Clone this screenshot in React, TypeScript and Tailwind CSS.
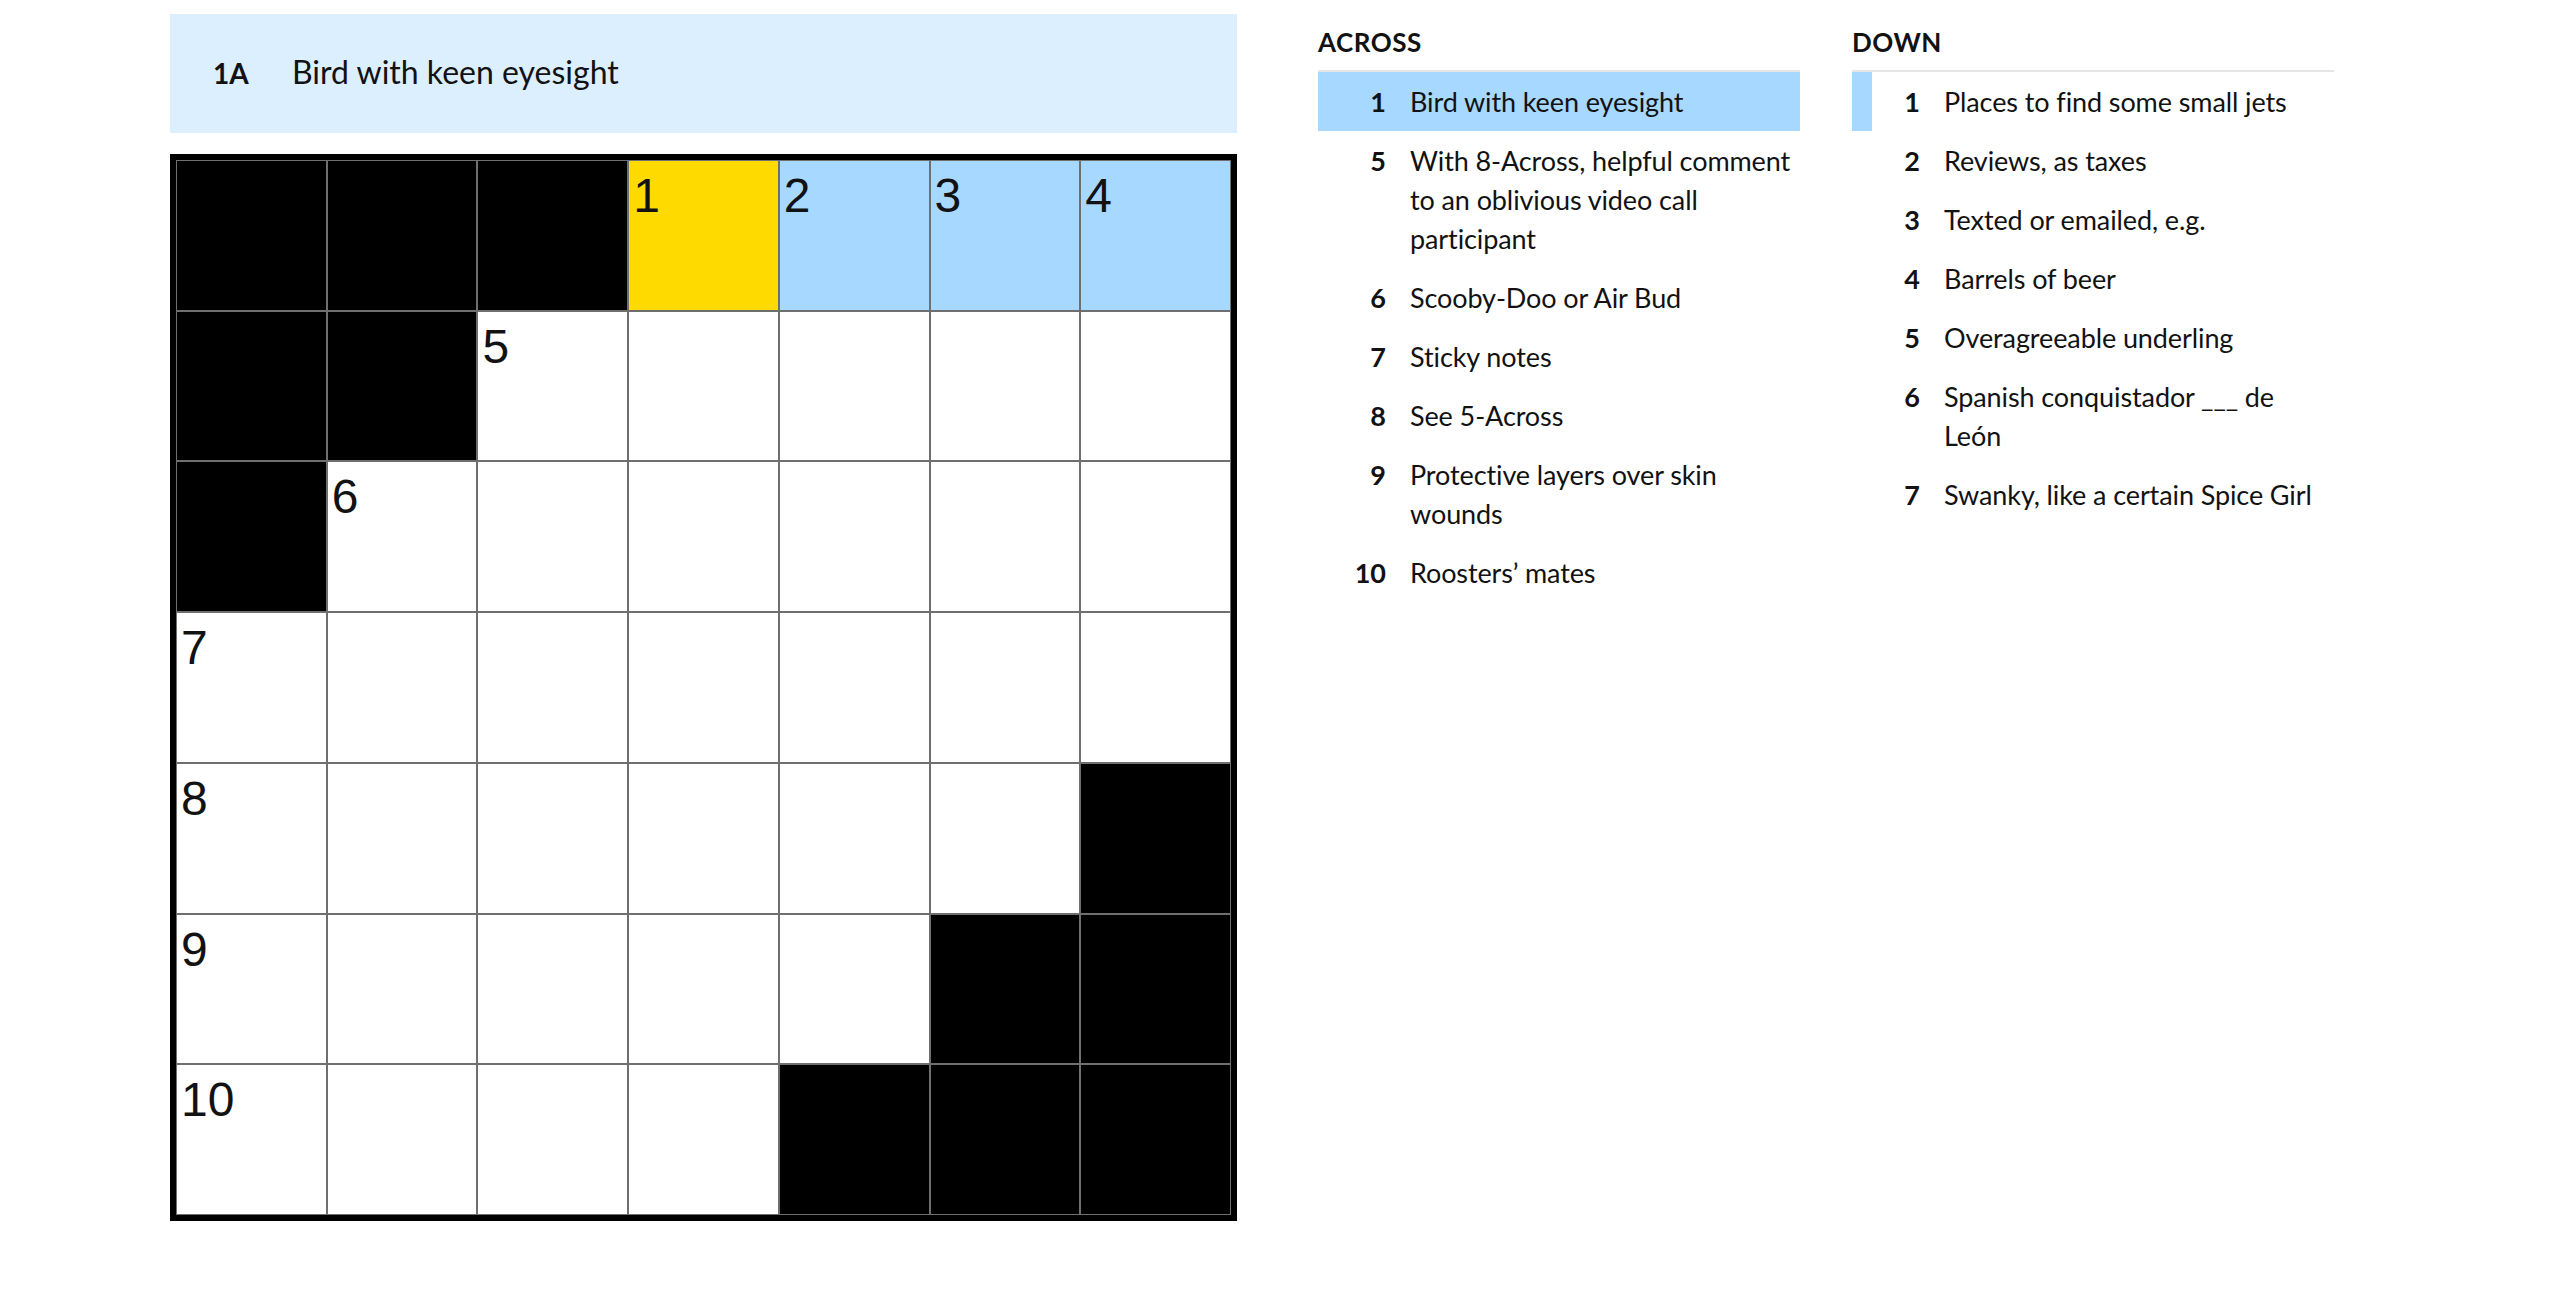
import React from 'react';

type Cell = { black?: boolean; num?: string; fill?: 'yellow' | 'blue' };

const B: Cell = { black: true };
const W: Cell = {};

const rows: Cell[][] = [
  [B, B, B, { num: '1', fill: 'yellow' }, { num: '2', fill: 'blue' }, { num: '3', fill: 'blue' }, { num: '4', fill: 'blue' }],
  [B, B, { num: '5' }, W, W, W, W],
  [B, { num: '6' }, W, W, W, W, W],
  [{ num: '7' }, W, W, W, W, W, W],
  [{ num: '8' }, W, W, W, W, W, B],
  [{ num: '9' }, W, W, W, W, B, B],
  [{ num: '10' }, W, W, W, B, B, B],
];

const across = [
  { n: '1', text: 'Bird with keen eyesight', active: true },
  { n: '5', text: 'With 8-Across, helpful comment to an oblivious video call participant' },
  { n: '6', text: 'Scooby-Doo or Air Bud' },
  { n: '7', text: 'Sticky notes' },
  { n: '8', text: 'See 5-Across' },
  { n: '9', text: 'Protective layers over skin wounds' },
  { n: '10', text: 'Roosters\u2019 mates' },
];

const down = [
  { n: '1', text: 'Places to find some small jets', cross: true },
  { n: '2', text: 'Reviews, as taxes' },
  { n: '3', text: 'Texted or emailed, e.g.' },
  { n: '4', text: 'Barrels of beer' },
  { n: '5', text: 'Overagreeable underling' },
  { n: '6', text: 'Spanish conquistador ___ de Le\u00f3n' },
  { n: '7', text: 'Swanky, like a certain Spice Girl' },
];

function cellBg(c: Cell) {
  if (c.black) return 'bg-black';
  if (c.fill === 'yellow') return 'bg-[#ffda00]';
  if (c.fill === 'blue') return 'bg-[#a7d8ff]';
  return 'bg-white';
}

function ClueList({
  title,
  items,
}: {
  title: string;
  items: { n: string; text: string; active?: boolean; cross?: boolean }[];
}) {
  return (
    <div className="w-[482px] flex flex-col">
      <div className="h-[56px] flex items-center text-[26px] font-bold text-[#121212] tracking-[0.5px]">{title}</div>
      <ul className="border-t-2 border-[#e6e6e6]">
        {items.map((c) => (
          <li
            key={c.n}
            className={`flex py-[10px] border-l-[20px] ${
              c.active ? 'bg-[#a7d8ff] border-[#a7d8ff]' : c.cross ? 'border-[#a7d8ff]' : 'border-transparent'
            }`}
          >
            <span className="w-[48px] shrink-0 text-right font-bold leading-[39px]">{c.n}</span>
            <span className="ml-[24px] leading-[39px] tracking-[-0.1px]">{c.text}</span>
          </li>
        ))}
      </ul>
    </div>
  );
}

export default function App() {
  return (
    <div className="min-h-screen bg-white text-[#121212] font-['Lato',sans-serif] flex pl-[170px] pt-[14px] gap-[81px]">
      <div className="w-[1067px] flex flex-col gap-[21px]">
        <div className="h-[119px] bg-[#dcefff] flex items-baseline pt-[42px] pl-[43px]">
          <span className="w-[79px] shrink-0 text-[28px] font-bold leading-none">1A</span>
          <span className="text-[32px] leading-none">Bird with keen eyesight</span>
        </div>
        <div className="w-[1067px] h-[1067px] border-[6px] border-black bg-[#6f6f6f] p-px">
          <div className="grid grid-cols-7 grid-rows-7 gap-[2px] w-full h-full">
            {rows.flat().map((c, i) => (
              <div key={i} className={`relative ${cellBg(c)}`}>
                {c.num && (
                  <span className="absolute left-[4px] top-[11px] text-[48px] leading-none font-['Liberation_Sans',Arial,sans-serif]">
                    {c.num}
                  </span>
                )}
              </div>
            ))}
          </div>
        </div>
      </div>
      <div className="flex gap-[52px] text-[27px]">
        <ClueList title="ACROSS" items={across} />
        <ClueList title="DOWN" items={down} />
      </div>
    </div>
  );
}
